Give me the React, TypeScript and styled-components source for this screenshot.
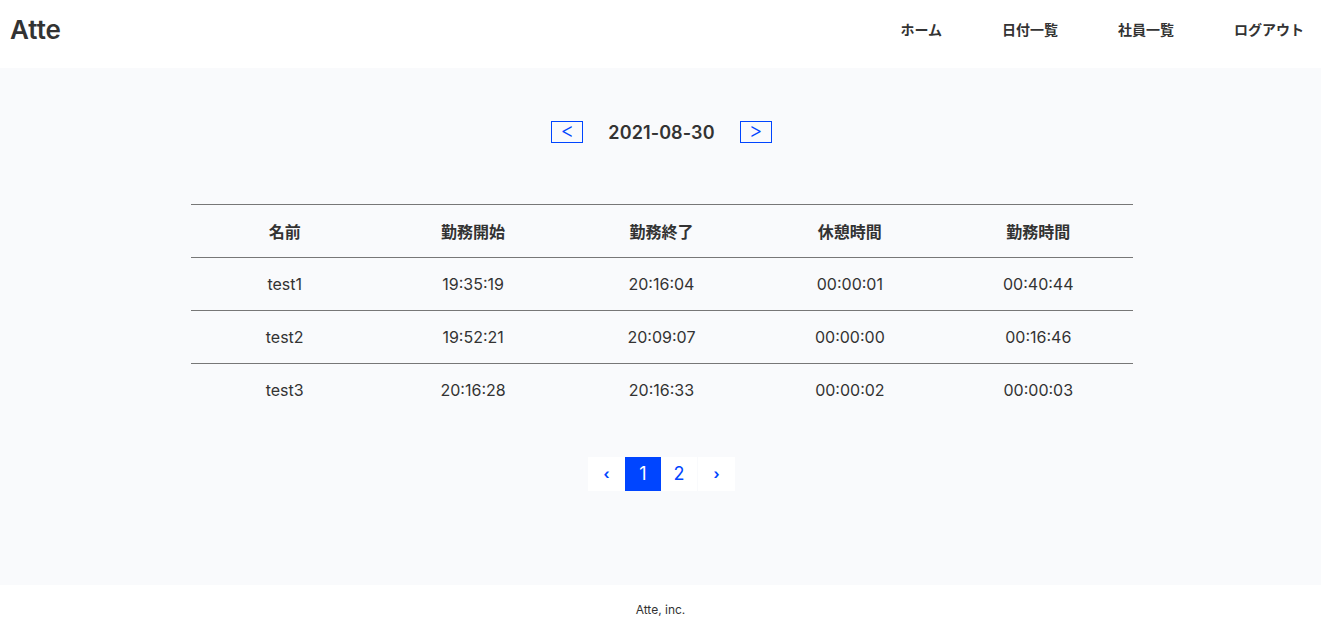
import styled, { createGlobalStyle } from "styled-components";

const GlobalStyle = createGlobalStyle`
  * {
    box-sizing: border-box;
  }
  body {
    margin: 0;
    font-family: "Inter", "Noto Sans CJK JP", sans-serif;
    color: #333;
    background-color: #fff;
  }
`;

const Page = styled.div`
  display: flex;
  flex-direction: column;
  min-height: 627px;
`;

const Header = styled.header`
  display: flex;
  justify-content: space-between;
  align-items: center;
  height: 68px;
  padding: 0 17px 10px 10px;
  background-color: #fff;
`;
const Logo = styled.h1`
  margin: 0;
  font-size: 26px;
  font-weight: 600;
  color: #333;
`;
const Nav = styled.nav`
  display: flex;
  gap: 60px;
  a {
    font-size: 14px;
    font-weight: 700;
    color: #333;
    text-decoration: none;
  }
`;

const Main = styled.main`
  flex: 1;
  display: flex;
  flex-direction: column;
  align-items: center;
  background-color: #f9fafc;
  padding: 53px 0 0 2px;
`;

const DateNav = styled.div`
  display: flex;
  align-items: center;
  gap: 25px;
`;
const DateBtn = styled.button`
  width: 32px;
  height: 22px;
  padding: 0 0 2px;
  border: 1px solid #0045ff;
  background: transparent;
  color: #0045ff;
  font-size: 21px;
  font-weight: 300;
  line-height: 18px;
  font-family: "Inter", sans-serif;
  cursor: pointer;
`;
const DateText = styled.span`
  font-size: 18px;
  font-weight: 600;
  letter-spacing: 0.1px;
  color: #333;
`;

const Table = styled.table`
  width: 942px;
  margin-top: 61px;
  border-collapse: collapse;
  table-layout: fixed;
`;
const Row = styled.tr`
  border-top: 1px solid #777;
`;
const Th = styled.th`
  height: 53px;
  font-size: 16px;
  font-weight: 700;
  color: #333;
`;
const Td = styled.td`
  height: 53px;
  font-size: 16px;
  text-align: center;
  color: #333;
`;

const Pager = styled.ul`
  display: flex;
  list-style: none;
  margin: 40px 0 0;
  padding: 0;
  li:last-child {
    margin-left: 1px;
  }
`;
const PageItem = styled.li<{ $active?: boolean; $arrow?: boolean }>`
  width: ${(p) => (p.$arrow ? "37px" : "36px")};
  height: 34px;
  display: flex;
  align-items: center;
  justify-content: center;
  font-size: ${(p) => (p.$arrow ? "14px" : "18px")};
  font-weight: ${(p) => (p.$arrow ? 700 : 400)};
  background-color: ${(p) => (p.$active ? "#0045ff" : "#fff")};
  color: ${(p) => (p.$active ? "#fff" : "#0045ff")};
  cursor: pointer;
`;

const Footer = styled.footer`
  height: 42px;
  display: flex;
  align-items: center;
  justify-content: center;
  padding-top: 6px;
  font-size: 12px;
  color: #333;
  background-color: #fff;
`;

const rows = [
  ["test1", "19:35:19", "20:16:04", "00:00:01", "00:40:44"],
  ["test2", "19:52:21", "20:09:07", "00:00:00", "00:16:46"],
  ["test3", "20:16:28", "20:16:33", "00:00:02", "00:00:03"],
];

export default function App() {
  return (
    <Page>
      <GlobalStyle />
      <Header>
        <Logo>Atte</Logo>
        <Nav>
          <a href="#">ホーム</a>
          <a href="#">日付一覧</a>
          <a href="#">社員一覧</a>
          <a href="#">ログアウト</a>
        </Nav>
      </Header>
      <Main>
        <DateNav>
          <DateBtn>&lt;</DateBtn>
          <DateText>2021-08-30</DateText>
          <DateBtn>&gt;</DateBtn>
        </DateNav>
        <Table>
          <thead>
            <Row>
              <Th>名前</Th>
              <Th>勤務開始</Th>
              <Th>勤務終了</Th>
              <Th>休憩時間</Th>
              <Th>勤務時間</Th>
            </Row>
          </thead>
          <tbody>
            {rows.map((r) => (
              <Row key={r[0]}>
                {r.map((c, i) => (
                  <Td key={i}>{c}</Td>
                ))}
              </Row>
            ))}
          </tbody>
        </Table>
        <Pager>
          <PageItem $arrow>‹</PageItem>
          <PageItem $active>1</PageItem>
          <PageItem>2</PageItem>
          <PageItem $arrow>›</PageItem>
        </Pager>
      </Main>
      <Footer>Atte, inc.</Footer>
    </Page>
  );
}
